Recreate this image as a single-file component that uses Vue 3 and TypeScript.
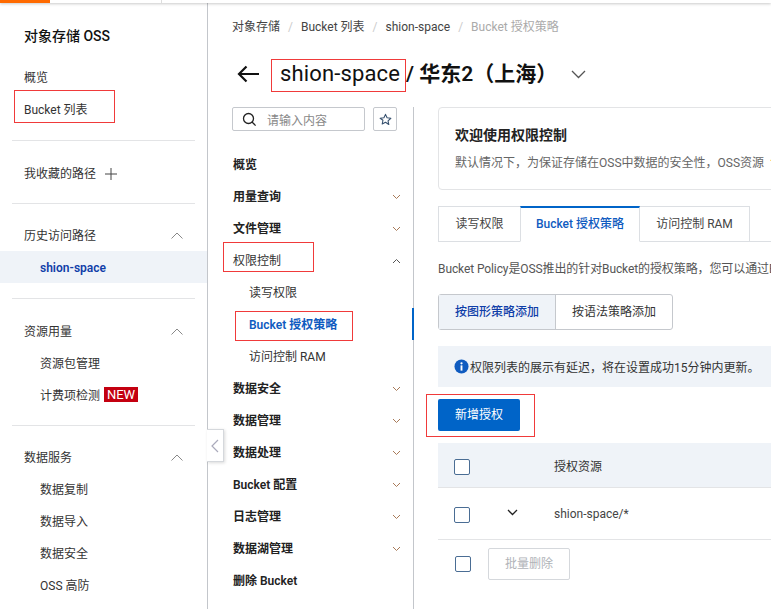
<script setup lang="ts">
interface NavItem { label: string; open?: boolean; bold?: boolean }
const sideGroups = [
  { title: '资源用量', items: ['资源包管理', '计费项检测'] },
  { title: '数据服务', items: ['数据复制', '数据导入', '数据安全', 'OSS 高防'] },
]
const navTop: NavItem[] = [
  { label: '用量查询' },
  { label: '文件管理' },
]
const navBottom: NavItem[] = [
  { label: '数据安全' },
  { label: '数据管理' },
  { label: '数据处理' },
  { label: 'Bucket 配置' },
  { label: '日志管理' },
  { label: '数据湖管理' },
]
</script>

<template>
  <div class="page">
    <div class="topbar"><div class="brand"></div><div class="topsep"></div></div>
    <div class="body">
      <aside class="side">
        <div class="side-title">对象存储 OSS</div>
        <div class="side-row">概览</div>
        <div class="side-row mark-host">Bucket 列表<span class="mark m-bucket"></span></div>
        <div class="rule r1"></div>
        <div class="side-row fav">我收藏的路径
          <svg class="plus" width="12" height="12" viewBox="0 0 12 12"><path d="M6 0v12M0 6h12" stroke="#444" fill="none"/></svg>
        </div>
        <div class="rule r2"></div>
        <div class="side-row head">历史访问路径
          <svg class="chev" width="12" height="7" viewBox="0 0 12 7"><path d="M.5 6.500l5.500-5.500 5.500 5.500" stroke="#888" fill="none"/></svg>
        </div>
        <div class="side-row sub current">shion-space</div>
        <div class="rule r3"></div>
        <template v-for="(g, i) in sideGroups" :key="g.title">
          <div class="side-row head">{{ g.title }}
            <svg class="chev" width="12" height="7" viewBox="0 0 12 7"><path d="M.5 6.500l5.500-5.500 5.500 5.500" stroke="#888" fill="none"/></svg>
          </div>
          <div v-for="it in g.items" :key="it" class="side-row sub">{{ it }}<span v-if="it === '计费项检测'" class="new">NEW</span></div>
          <div v-if="i === 0" class="rule r4"></div>
        </template>
      </aside>

      <main class="main">
        <nav class="crumbs">
          <span>对象存储</span><i>/</i><span>Bucket 列表</span><i>/</i><span>shion-space</span><i>/</i><span class="last">Bucket 授权策略</span>
        </nav>
        <div class="heading">
          <svg class="back" width="22" height="18" viewBox="0 0 22 18"><path d="M22 9H2M9.500 1.500L2 9l7.500 7.500" stroke="#111" stroke-width="2.200" fill="none"/></svg>
          <span class="name">shion-space</span>
          <span class="rest">/ 华东2（上海）</span>
          <svg class="head-chev" width="15" height="9" viewBox="0 0 15 9"><path d="M1 1l6.500 6.500L14 1" stroke="#555" stroke-width="1.300" fill="none"/></svg>
          <div class="name-box"></div>
        </div>

        <div class="columns">
          <div class="subnav">
            <div class="searchline">
              <div class="search">
                <svg width="15" height="15" viewBox="0 0 15 15"><circle cx="6.500" cy="6.500" r="5" stroke="#222" stroke-width="1.300" fill="none"/><path d="M10 10l3.600 3.600" stroke="#222" stroke-width="1.300"/></svg>
                <span>请输入内容</span>
              </div>
              <div class="star">
                <svg width="13" height="13" viewBox="0 0 24 24"><path d="M12 2.500l2.900 6.400 7 .8-5.200 4.700 1.400 6.900L12 17l-6.100 3.300 1.400-6.900L2.100 9.700l7-.8z" stroke="#36506e" stroke-width="2" fill="none" stroke-linejoin="round"/></svg>
              </div>
            </div>
            <div class="nav-list">
              <div class="nav-row strong">概览</div>
              <div v-for="n in navTop" :key="n.label" class="nav-row strong">{{ n.label }}
                <svg class="nchev" width="9" height="6" viewBox="0 0 9 6"><path d="M1 1l3.500 3.500L8 1" stroke="#a87a58" fill="none"/></svg>
              </div>
              <div class="nav-row mark-host">权限控制<span class="mark m-perm"></span>
                <svg class="nchev" width="9" height="6" viewBox="0 0 9 6"><path d="M1 5l3.500-3.500L8 5" stroke="#555" fill="none"/></svg>
              </div>
              <div class="nav-row child">读写权限</div>
              <div class="nav-row child active mark-host">Bucket 授权策略<span class="mark m-policy"></span></div>
              <div class="nav-row child">访问控制 RAM</div>
              <div v-for="n in navBottom" :key="n.label" class="nav-row strong">{{ n.label }}
                <svg class="nchev" width="9" height="6" viewBox="0 0 9 6"><path d="M1 1l3.500 3.500L8 1" stroke="#a87a58" fill="none"/></svg>
              </div>
              <div class="nav-row strong">删除 Bucket</div>
            </div>
            <div class="collapse">
              <svg width="8" height="14" viewBox="0 0 8 14"><path d="M7 1L1 7l6 6" stroke="#aab" stroke-width="1.200" fill="none"/></svg>
            </div>
          </div>

          <section class="content">
            <div class="card">
              <div class="card-title">欢迎使用权限控制</div>
              <div class="card-text">默认情况下，为保证存储在OSS中数据的安全性，OSS资源 <span class="warn">包括</span></div>
            </div>
            <div class="tabs">
              <div class="tab t1">读写权限</div>
              <div class="tab t2 on">Bucket 授权策略</div>
              <div class="tab t3">访问控制 RAM</div>
            </div>
            <p class="intro">Bucket Policy是OSS推出的针对Bucket的授权策略，您可以通过Bucket Policy授权其他用户访问您的OSS资源</p>
            <div class="seg">
              <div class="seg-btn sel">按图形策略添加</div>
              <div class="seg-btn">按语法策略添加</div>
            </div>
            <div class="notice">
              <svg width="15" height="15" viewBox="0 0 16 16"><circle cx="8" cy="8" r="7.500" fill="#0f5bc0"/><circle cx="8" cy="4.600" r="1.200" fill="#fff"/><rect x="7" y="6.800" width="2" height="5.600" fill="#fff"/></svg>
              <span>权限列表的展示有延迟，将在设置成功15分钟内更新。</span>
            </div>
            <div class="add mark-host">新增授权<span class="mark m-add"></span></div>
            <div class="thead">
              <span class="check lower"></span>
              <span class="col">授权资源</span>
            </div>
            <div class="trow">
              <span class="check lower"></span>
              <svg class="rowchev" width="11" height="7" viewBox="0 0 11 7"><path d="M1 1l4.500 4.500L10 1" stroke="#222" stroke-width="1.300" fill="none"/></svg>
              <span class="col cell">shion-space/*</span>
            </div>
            <div class="tfoot">
              <span class="check"></span>
              <div class="batch">批量删除</div>
            </div>
          </section>
        </div>
      </main>
    </div>
  </div>
</template>

<style>
html, body { margin: 0; background: #fff; }
</style>

<style scoped>
.page { width: 771px; height: 609px; overflow: hidden; position: relative; background: #fff; color: #333; font-family: Roboto, "Noto Sans CJK SC", sans-serif; font-size: 12px; }
.topbar { height: 3px; background: #fff; box-shadow: 0 1px 3px rgba(0,0,0,.22); position: relative; z-index: 2; display: flex; }
.brand { width: 50px; background: #ff6a00; }
.topsep { margin-left: 111px; width: 1px; background: #ddd; }
.body { display: flex; height: 606px; }
.mark-host { position: relative; }
.mark { position: absolute; border: 1px solid #f03a3a; pointer-events: none; box-sizing: border-box; }

.side { width: 207px; flex: none; border-right: 1px solid #c3c6cb; box-sizing: content-box; padding-top: 17px; }
.side-title { height: 32px; padding-left: 24px; line-height: 32px; font-size: 14px; font-weight: 500; color: #111; margin-bottom: 9px; }
.side-row { height: 32px; line-height: 34px; padding-left: 24px; position: relative; color: #333; white-space: nowrap; }
.m-bucket { left: 14px; top: -3px; width: 101px; height: 33px; }
.rule { height: 1px; background: #e3e4e6; margin: 0 12px; }
.r1 { margin-top: 15px; margin-bottom: 16px; }
.r2 { margin-top: 14px; margin-bottom: 15px; }
.r3 { margin-top: 15px; margin-bottom: 16px; }
.r4 { margin-top: 14px; margin-bottom: 15px; }
.plus { position: absolute; left: 105px; top: 11px; }
.chev { position: absolute; left: 171px; top: 13px; }
.sub { padding-left: 40px; }
.current { background: #eff3f8; color: #0f3ea8; font-weight: 600; }
.new { display: inline-block; background: #c40010; color: #fff; font-size: 13px; line-height: 15px; height: 15px; width: 34px; text-align: center; margin-left: 4px; vertical-align: 1px; }

.main { flex: 1; min-width: 0; padding-top: 8px; }
.crumbs { height: 32px; line-height: 33px; padding-left: 24px; color: #444; white-space: nowrap; }
.crumbs i { font-style: normal; color: #ccc; margin: 0 8px; }
.crumbs .last { color: #aaa; }
.heading { height: 32px; margin-top: 15px; padding-left: 29px; display: flex; align-items: center; white-space: nowrap; color: #111; font-size: 21px; position: relative; line-height: 34px; }
.name { margin-left: 21px; font-weight: 400; font-size: 22px; letter-spacing: .15px; }
.rest { margin-left: 6px; font-weight: 600; }
.head-chev { margin-left: 14px; }
.name-box { position: absolute; left: 63px; top: 1px; width: 135px; height: 33px; box-sizing: border-box; border: 1px solid #f03a3a; }
.columns { display: flex; margin-top: 17px; height: 502px; }
.subnav { width: 181px; flex: none; padding-left: 24px; padding-right: 0; position: relative; box-sizing: content-box; border-right: 1px solid #c3c6cb; margin-right: 24px; }
.searchline { display: flex; gap: 8px; height: 24px; width: 165px; }
.search { width: 133px; box-sizing: border-box; border: 1px solid #c5c8cd; border-radius: 2px; display: flex; align-items: center; padding-left: 9px; color: #888; gap: 10px; }
.star { width: 24px; box-sizing: border-box; border: 1px solid #c5c8cd; border-radius: 2px; display: flex; align-items: center; justify-content: center; }
.nav-list { margin-top: 17px; width: 165px; }
.nav-row { height: 32px; line-height: 34px; padding-left: 1px; position: relative; white-space: nowrap; }
.strong { font-weight: 600; color: #222; }
.nchev { position: absolute; right: -4px; top: 14px; }
.child { padding-left: 17px; }
.active { color: #0f5bc0; font-weight: 600; }
.active::after { content: ""; position: absolute; left: 180px; top: 0; width: 2px; height: 32px; background: #0064c8; }
.m-perm { left: -9px; top: -2px; width: 91px; height: 30px; }
.m-policy { left: 3px; top: 3px; width: 118px; height: 30px; }
.collapse { position: absolute; left: -1px; top: 322px; width: 17px; height: 33px; background: #fff; border: 1px solid #d5d8dc; border-left: none; box-shadow: 1px 1px 3px rgba(0,0,0,.15); display: flex; align-items: center; justify-content: center; box-sizing: border-box; }

.content { flex: none; width: 600px; }
.card { height: 83px; box-sizing: border-box; border: 1px solid #e3e4e6; border-radius: 4px; padding: 16px; white-space: nowrap; overflow: hidden; }
.card-title { font-size: 14px; font-weight: 600; color: #222; line-height: 22px; }
.card-text { margin-top: 8px; color: #666; line-height: 18px; }
.warn { color: #f98e1d; margin-left: 3px; }
.tabs { display: flex; height: 36px; margin-top: 16px; border-bottom: 1px solid #dcdfe3; box-sizing: border-box; }
.tab { box-sizing: border-box; height: 36px; border: 1px solid #dcdfe3; line-height: 35px; text-align: center; color: #444; white-space: nowrap; }
.t1 { width: 82px; border-right: none; }
.t2 { width: 120px; }
.t3 { width: 110px; border-left: none; }
.on { border-top: 2px solid #0064c8; border-bottom-color: #fff; color: #0f5bc0; font-weight: 500; line-height: 33px; }
.intro { margin: 17px 0 0; height: 20px; line-height: 20px; color: #555; white-space: nowrap; overflow: hidden; letter-spacing: -.1px; }
.seg { display: inline-flex; margin-top: 15px; border: 1px solid #c5c8cd; border-radius: 3px; height: 36px; box-sizing: border-box; vertical-align: top; }
.seg-btn { width: 116px; text-align: center; line-height: 34px; color: #333; }
.sel { background: #eff3f8; color: #0f3ea8; font-weight: 500; border-right: 1px solid #c5c8cd; }
.notice { margin-top: 16px; height: 41px; background: #eff3f8; display: flex; align-items: center; padding-left: 16px; gap: 1px; color: #333; font-size: 12px; }
.add { margin-top: 12px; width: 82px; height: 32px; line-height: 32px; text-align: center; background: #0064c8; color: #fff; border-radius: 2px; }
.m-add { left: -12px; top: -5px; width: 109px; height: 43px; }
.thead { margin-top: 12px; height: 45px; background: #eff3f8; border-bottom: 1px solid #e3e4e6; box-sizing: border-box; display: flex; align-items: center; padding-left: 16px; color: #333; position: relative; }
.check { width: 16px; height: 16px; box-sizing: border-box; border: 1px solid #4a6d94; border-radius: 2px; background: #fff; flex: none; }
.lower { margin-top: 3px; }
.col { position: absolute; left: 116px; margin-top: 1px; }
.trow { height: 52px; border-bottom: 1px solid #e3e4e6; box-sizing: border-box; display: flex; align-items: center; padding-left: 16px; position: relative; }
.rowchev { margin-left: 37px; margin-top: -2px; }
.cell { color: #444; }
.tfoot { display: flex; align-items: center; height: 32px; padding-left: 17px; margin-top: 8px; }
.batch { margin-left: 17px; width: 82px; height: 32px; box-sizing: border-box; border: 1px solid #d5d8dc; border-radius: 2px; text-align: center; line-height: 30px; color: #b0b3b8; }
</style>
